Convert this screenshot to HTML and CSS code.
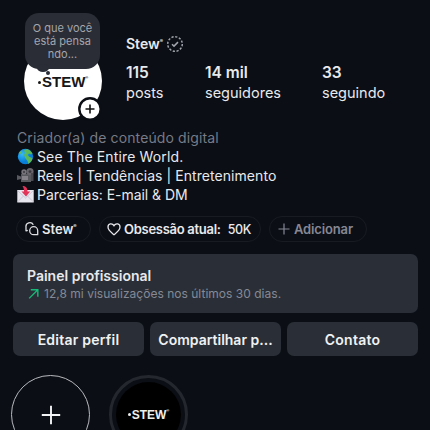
FILE: index.html
```html
<!DOCTYPE html>
<html lang="pt-BR">
<head>
<meta charset="utf-8">
<title>Stew</title>
<link rel="stylesheet" href="styles.css">
</head>
<body>
<main class="profile">
  <header class="header">
    <div class="avatar">
      <span class="brand"><i class="dot"></i>STEW<sup>®</sup></span>
      <div class="note">O que você<br>está pensa<br>ndo...</div>
      <svg class="add" viewBox="0 0 24 24"><circle cx="12" cy="12" r="10.7" fill="#fff" stroke="#0b0e15" stroke-width="2.4"/><path d="M12 7.500v9M7.500 12h9" stroke="#111" stroke-width="1.600"/></svg>
    </div>
    <div class="summary">
      <div class="name"><span>Stew<sup>®</sup></span>
        <svg class="verified" viewBox="0 0 18 18" fill="none"><circle cx="9" cy="9" r="7.3" stroke="#a0a3ab" stroke-width="1.5" stroke-dasharray="2.2 1.62"/><path d="M6 9.2l2 1.9 4-4" stroke="#a0a3ab" stroke-width="1.5"/></svg>
      </div>
      <div class="stats">
        <div class="stat"><b>115</b><span class="posts">posts</span></div>
        <div class="stat"><b>14 mil</b><span class="followers">seguidores</span></div>
        <div class="stat"><b>33</b><span class="following">seguindo</span></div>
      </div>
    </div>
  </header>
  <section class="bio">
    <p class="category">Criador(a) de conteúdo digital</p>
    <p><svg class="emoji" viewBox="0 0 17 17"><defs><radialGradient id="sea" cx=".3" cy=".35"><stop stop-color="#36b9f8"/><stop offset="1" stop-color="#087ed8"/></radialGradient></defs><circle cx="8.5" cy="8.5" r="7.7" fill="url(#sea)"/><path d="M7 2.500L10 1l3 1.500 2.500 3-1.500 1-2-1-1.500 1.500 2 2 3 1-1 3-3 3-1-3-2-2.500L7 7l1-2z" fill="#5cb958"/><path d="M2 5l2-2 1 1-1.500 2z" fill="#62bd65"/></svg><span class="world">See The Entire World.</span></p>
    <p><svg class="emoji" viewBox="0 0 17 17"><path d="M0 8l4 1.500V7h10v8H4v-3l-4 1z" fill="#595960"/><circle cx="7" cy="5" r="2.700" fill="#77747b"/><circle cx="13" cy="4.600" r="3.600" fill="#69666d"/><circle cx="13" cy="4.600" r="1.400" fill="#39383e"/><circle cx="7" cy="5" r="1" fill="#39383e"/><path d="M5 9h6v4H5z" fill="#85828a"/><path d="M14 6h2.500v8H14z" fill="#4c4a51"/></svg><span class="reels">Reels | Tendências | Entretenimento</span></p>
    <p><svg class="emoji" viewBox="0 0 17 17"><path d="M.3 4h16.400v12.500H.3z" fill="#e7e5ed"/><path d="M.5 16l6-6M16.500 16l-6-6M.5 4.500l8 7.500 8-7.500" fill="none" stroke="#c4c0cf" stroke-width=".8"/><path d="M5.500 0c3 0 5 1.500 5 5.500h2.700L9 10.500 4.500 5.500H7C7 3 6.500 1.500 5.500 0z" fill="#e23358"/></svg><span class="mail">Parcerias: E-mail &amp; DM</span></p>
  </section>
  <nav class="pills">
    <a class="pill channel"><svg viewBox="0 0 14 14" fill="none" stroke="#dedfe3" stroke-width="1.300" stroke-linejoin="round"><path d="M2.800 8.300L1 8.800V5.200A3.900 3.900 0 0 1 8.300 2.800"/><path d="M12.700 12.700H8.700a4 4 0 1 1 4-4z"/></svg><span>Stew<sup>®</sup></span></a>
    <a class="pill obsession"><svg viewBox="0 0 14 14" fill="none" stroke="#e7e7eb" stroke-width="1.300"><path d="M7 12.700C4.500 10.700 1 8.500 1 5.100 1 1.500 5.200.7 7 3.700 8.800.7 13 1.500 13 5.100c0 3.400-3.500 5.600-6 7.600z"/></svg><span>Obsessão atual:</span><em>50K</em></a>
    <a class="pill include"><svg viewBox="0 0 14 14" fill="none" stroke="#858894" stroke-width="1.200"><path d="M7 1.500v11M1.500 7h11"/></svg><span>Adicionar</span></a>
  </nav>
  <section class="panel">
    <h2>Painel profissional</h2>
    <p><svg viewBox="0 0 12 12" fill="none" stroke="#16b978" stroke-width="1.300"><path d="M2 10.500l8-8M3.500 2.500H10V9"/></svg><span>12,8 mi visualizações nos últimos 30 dias.</span></p>
  </section>
  <div class="actions">
    <button><span class="edit">Editar perfil</span></button>
    <button><span class="share">Compartilhar p...</span></button>
    <button><span class="contact">Contato</span></button>
  </div>
  <div class="highlights">
    <div class="new"><svg viewBox="0 0 20 20"><path d="M10 .8v18.400M.8 10h18.400" stroke="#f2f3f5" stroke-width="1.900"/></svg></div>
    <div class="story"><div class="cover"><span class="brand"><i class="dot"></i>STEW<sup>®</sup></span></div></div>
  </div>
</main>
</body>
</html>
```
FILE: styles.css
```css
* { box-sizing: border-box; margin: 0; padding: 0; }
body { background: #0b0e15; color: #e8e9ec; font-family: Inter, sans-serif; overflow: hidden; }
span, em, b { white-space: nowrap; }
sup { font-size: 5px; line-height: 0; vertical-align: 6px; }
.profile { width: 430px; height: 430px; overflow: hidden; }
.header { display: flex; height: 128px; padding: 35px 0 0 24px; }
.avatar { position: relative; width: 78px; height: 78px; margin: 7px 24px 0 0; border-radius: 50%; background: #fff; color: #171717; padding: 31px 0 0 14px; }
.brand { display: flex; align-items: center; font: bold 15px/18px "Liberation Sans", sans-serif; }
.brand sup { font-size: 4px; margin-bottom: 8px; }
.dot { width: 3px; height: 3px; border-radius: 50%; background: currentColor; margin-right: 1px; }
.note { position: absolute; left: 1px; top: -29px; width: 75px; height: 56px; padding-top: 9px; border-radius: 14px; background: #2a2d35; color: #a4a6ad; font-size: 11px; line-height: 13px; text-align: center; }
.note::before, .note::after { content: ""; position: absolute; border-radius: 50%; background: #2a2d35; }
.note::before { width: 12px; height: 8px; left: 12px; top: 51px; }
.note::after { width: 4px; height: 4px; left: 21px; top: 58px; }
.add { position: absolute; left: 54px; top: 55px; width: 24px; height: 24px; }
.name { display: flex; align-items: center; height: 17px; gap: 3px; font-size: 14px; font-weight: 600; }
.verified { width: 18px; height: 18px; }
.stats { display: grid; grid-template-columns: 79px 117px 80px; margin-top: 11px; }
.stat { display: flex; flex-direction: column; font-size: 14.5px; line-height: 20px; }
.stat b { font-size: 15.5px; font-weight: 600; }
.bio { padding-left: 17px; font-size: 14px; line-height: 19px; }
.bio p { display: flex; align-items: center; height: 19px; gap: 3px; }
.bio .category { color: #777b86; letter-spacing: .12px; }
.world { letter-spacing: .14px; }
.reels { letter-spacing: .06px; }
.mail { letter-spacing: -.04px; }
.emoji { width: 17px; height: 17px; }
.pills { display: flex; gap: 8px; margin: 12px 0 0 16px; }
.pill { display: flex; align-items: center; height: 26px; border: 1px solid #181b22; border-radius: 13px; padding-left: 7px; font-size: 13px; font-weight: 600; }
.pill svg { width: 14px; height: 14px; margin-right: 3px; }
.pill em { font-size: 12.5px; font-style: normal; font-weight: 500; margin-left: 7px; letter-spacing: -.4px; }
.channel { width: 75px; padding-left: 8px; }
.obsession { width: 162px; }
.obsession span { letter-spacing: -.28px; }
.include { width: 98px; color: #858894; letter-spacing: -.15px; }
.panel { width: 405px; height: 59px; margin: 12px 0 0 13px; padding: 13px 14px; border-radius: 7px; background: #2a2f37; }
.panel h2 { font-size: 14px; line-height: 18px; font-weight: 600; }
.panel p { display: flex; align-items: center; gap: 4px; height: 17px; color: #858995; font-size: 12px; letter-spacing: .02px; }
.panel svg { width: 13px; height: 13px; }
.actions { display: grid; grid-template-columns: repeat(3, 1fr); gap: 6px; width: 405px; margin: 9px 0 0 13px; }
.actions button { height: 34px; border: 0; border-radius: 7px; background: #2a2f37; color: #f0f1f3; font: 600 14px Inter, sans-serif; }
.edit, .contact { letter-spacing: .23px; }
.highlights { display: flex; gap: 19px; margin: 19px 0 0 11px; }
.new, .story { display: flex; align-items: center; justify-content: center; width: 79px; height: 79px; border-radius: 50%; border: 1px solid #b9bac0; }
.new svg { width: 20px; height: 20px; }
.story { border: 3px solid #24272e; }
.cover { display: flex; align-items: center; justify-content: center; width: 65px; height: 65px; border-radius: 50%; background: #000; color: #eee; }
.cover .brand { font-size: 12px; }
```
